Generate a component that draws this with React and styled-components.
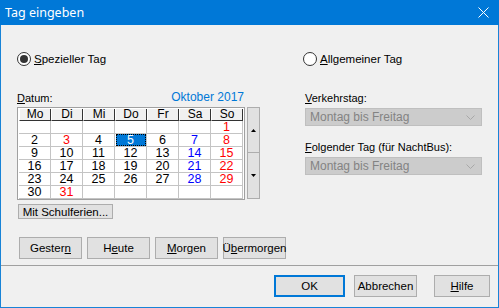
import React from "react";
import styled, { createGlobalStyle } from "styled-components";

const GlobalStyle = createGlobalStyle`
  html, body {
    margin: 0;
    padding: 0;
    background: #f0f0f0;
  }
  * { box-sizing: border-box; }
`;

const Window = styled.div`
  width: 499px;
  height: 308px;
  display: flex;
  flex-direction: column;
  background: #f0f0f0;
  border: 1px solid #1883d7;
  border-top: none;
  font-family: "Liberation Sans", Arial, sans-serif;
  font-size: 11px;
  color: #000;
`;

const TitleBar = styled.div`
  height: 25px;
  margin: 0 -1px;
  padding: 0 10px 0 5px;
  background: #0078d7;
  color: #fff;
  display: flex;
  align-items: center;
  justify-content: space-between;
  font-family: "Noto Sans", sans-serif;
  font-size: 12.5px;
`;

const Body = styled.div`
  flex: 1;
  display: flex;
  padding: 27px 0 0 16px;
`;

const LeftCol = styled.div`
  width: 243px;
  display: flex;
  flex-direction: column;
`;

const RightCol = styled.div`
  width: 179px;
  margin-left: 43px;
  display: flex;
  flex-direction: column;
`;

const RadioRow = styled.label`
  display: flex;
  align-items: center;
  height: 14px;
  gap: 3px;
  font-size: 11.5px;
`;

const RadioCircle = styled.span`
  width: 14px;
  height: 14px;
  border-radius: 50%;
  border: 1px solid #333;
  background: #fff;
  display: flex;
  align-items: center;
  justify-content: center;
  &::after {
    content: "";
    width: 8px;
    height: 8px;
    border-radius: 50%;
    background: ${(p) => (p.$checked ? "#333" : "transparent")};
  }
`;

const U = styled.span`
  text-decoration: underline;
  text-underline-offset: 1px;
`;

const LabelRow = styled.div`
  display: flex;
  justify-content: space-between;
  align-items: flex-end;
  height: 13px;
  margin-top: ${(p) => p.$mt}px;
  font-size: 11px;
  width: 227px;
`;

const MonthTitle = styled.span`
  color: #0078d7;
  font-size: 12px;
`;

const CalRow = styled.div`
  display: flex;
  margin-top: 3px;
  gap: 2px;
`;

const Calendar = styled.div`
  width: 228px;
  height: 93px;
  border: 1px solid #a0a0a0;
  background: #fff;
  padding: 1px;
  display: grid;
  grid-template-columns: repeat(7, 32px);
  grid-template-rows: 12px repeat(6, 13px);
`;

const HeadCell = styled.div`
  background: #f0f0f0;
  border-right: 1px solid #333;
  border-bottom: 1px solid #333;
  border-left: 1px solid #fff;
  display: flex;
  align-items: center;
  justify-content: center;
  font-size: 12px;
  line-height: 11px;
`;

const DayCell = styled.div`
  border-right: 1px solid #c4c4c4;
  border-bottom: 1px solid #c4c4c4;
  display: flex;
  align-items: center;
  justify-content: center;
  font-size: 12.5px;
  line-height: 12px;
  color: ${(p) => p.$color};
`;

const SelectedMark = styled.span`
  width: 30px;
  height: 12px;
  background: #0078d7;
  color: #fff;
  outline: 1px dotted #000;
  outline-offset: -1px;
  display: flex;
  align-items: center;
  justify-content: center;
`;

const ScrollCol = styled.div`
  display: flex;
  flex-direction: column;
  width: 14px;
`;

const ScrollBtn = styled.div`
  height: 46px;
  border: 1px solid #adadad;
  background: #e1e1e1;
  display: flex;
  align-items: center;
  justify-content: center;
  & + & { margin-top: -1px; height: 47px; }
`;

const Button = styled.div`
  flex-shrink: 0;
  width: ${(p) => p.$w}px;
  height: ${(p) => p.$h || 22}px;
  border: ${(p) => (p.$default ? "2px solid #0078d7" : "1px solid #adadad")};
  background: #e1e1e1;
  display: flex;
  align-items: center;
  justify-content: center;
  font-size: 11.5px;
  white-space: nowrap;
  margin-left: ${(p) => p.$ml || 0}px;
`;

const SmallRow = styled.div`
  margin-top: 4px;
  margin-left: 1px;
`;

const NavRow = styled.div`
  display: flex;
  gap: 5px;
  margin-top: 18px;
  margin-left: 2px;
`;

const FieldLabel = styled.div`
  margin-top: ${(p) => p.$mt}px;
  height: 13px;
  font-size: 11px;
  margin-left: 2px;
`;

const Combo = styled.div`
  margin-top: ${(p) => p.$mt}px;
  margin-left: 2px;
  height: 18px;
  width: 177px;
  background: #cccccc;
  border: 1px solid #bfbfbf;
  color: #838383;
  font-size: 12px;
  display: flex;
  align-items: center;
  justify-content: space-between;
  padding: 0 6px 0 4px;
`;

const Footer = styled.div`
  height: 42px;
  border-top: 1px solid #a0a0a0;
  display: flex;
  justify-content: flex-end;
  align-items: flex-start;
  padding: 9px 8px 0 0;
`;

const Arrow = ({ up }) => (
  <svg width="5" height="3" viewBox="0 0 5 3">
    <path d={up ? "M2.5 0 L5 3 L0 3 Z" : "M0 0 L5 0 L2.5 3 Z"} fill="#000" />
  </svg>
);

const Chevron = () => (
  <svg width="9" height="5" viewBox="0 0 9 5">
    <path d="M0.5 0.5 L4.5 4.5 L8.5 0.5" fill="none" stroke="#a8a8a8" />
  </svg>
);

const CloseIcon = () => (
  <svg width="11" height="11" viewBox="0 0 11 11">
    <path d="M0.5 0.5 L10.5 10.5 M10.5 0.5 L0.5 10.5" stroke="#fff" strokeWidth="1" />
  </svg>
);

const heads = ["Mo", "Di", "Mi", "Do", "Fr", "Sa", "So"];
const holidays = [3, 31];

function buildDays() {
  const cells = [];
  for (let i = 0; i < 6; i++) cells.push(null);
  for (let d = 1; d <= 31; d++) cells.push(d);
  while (cells.length < 42) cells.push(null);
  return cells;
}

function dayColor(d, col) {
  if (d == null) return "#000";
  if (col === 6 || holidays.includes(d)) return "#ff0000";
  if (col === 5) return "#0000ff";
  return "#000";
}

export default function App() {
  const days = buildDays();
  return (
    <>
      <GlobalStyle />
      <Window>
        <TitleBar>
          <span>Tag eingeben</span>
          <CloseIcon />
        </TitleBar>
        <Body>
          <LeftCol>
            <RadioRow>
              <RadioCircle $checked />
              <span><U>S</U>pezieller Tag</span>
            </RadioRow>
            <LabelRow $mt={25}>
              <span><U>D</U>atum:</span>
              <MonthTitle>Oktober 2017</MonthTitle>
            </LabelRow>
            <CalRow>
              <Calendar>
                {heads.map((h) => (
                  <HeadCell key={h}>{h}</HeadCell>
                ))}
                {days.map((d, i) => (
                  <DayCell key={i} $color={dayColor(d, i % 7)}>
                    {d === 5 ? <SelectedMark>5</SelectedMark> : d}
                  </DayCell>
                ))}
              </Calendar>
              <ScrollCol>
                <ScrollBtn><Arrow up /></ScrollBtn>
                <ScrollBtn><Arrow /></ScrollBtn>
              </ScrollCol>
            </CalRow>
            <SmallRow>
              <Button $w={95} $h={15}>Mit Schulferien...</Button>
            </SmallRow>
            <NavRow>
              <Button $w={63}>Geste<span>r</span><U>n</U></Button>
              <Button $w={63}>H<U>e</U>ute</Button>
              <Button $w={63}><U>M</U>orgen</Button>
              <Button $w={63}>Ü<U>b</U>ermorgen</Button>
            </NavRow>
          </LeftCol>
          <RightCol>
            <RadioRow>
              <RadioCircle />
              <span><U>A</U>llgemeiner Tag</span>
            </RadioRow>
            <FieldLabel $mt={26}><U>V</U>erkehrstag:</FieldLabel>
            <Combo $mt={3}>
              <span>Montag bis Freitag</span>
              <Chevron />
            </Combo>
            <FieldLabel $mt={15}><U>F</U>olgender Tag (für NachtBus):</FieldLabel>
            <Combo $mt={3}>
              <span>Montag bis Freitag</span>
              <Chevron />
            </Combo>
          </RightCol>
        </Body>
        <Footer>
          <Button $w={71} $default>OK</Button>
          <Button $w={63} $ml={9}>Abbrechen</Button>
          <Button $w={56} $ml={17}><U>H</U>ilfe</Button>
        </Footer>
      </Window>
    </>
  );
}
